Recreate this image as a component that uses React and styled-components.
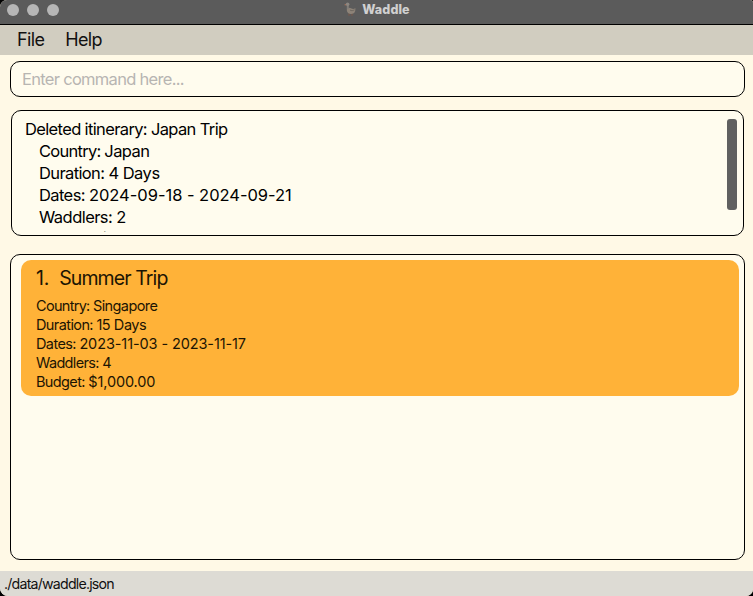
import React from 'react';
import styled, { createGlobalStyle } from 'styled-components';

const GlobalStyle = createGlobalStyle`
  * { box-sizing: border-box; }
  html, body { margin: 0; padding: 0; background: #000; overflow: hidden; }
  body { font-family: Inter, "Liberation Sans", sans-serif; color: #111; }
`;

const Window = styled.div`
  width: 753px;
  height: 596px;
  display: flex;
  flex-direction: column;
  overflow: hidden;
  background: #fff9e6;
  border-radius: 7px 3px 7px 8px;
`;

const TitleBar = styled.header`
  flex: none;
  height: 25px;
  display: grid;
  grid-template-columns: 1fr auto 1fr;
  align-items: start;
  background: #5b5b5b;
  border-bottom: 1px solid #000;
`;

const Lights = styled.div`
  display: flex;
  gap: 8px;
  padding: 4px 0 0 7px;
`;

const Light = styled.span`
  width: 12px;
  height: 12px;
  border-radius: 50%;
  background: #b6b6b6;
`;

const Title = styled.div`
  display: flex;
  gap: 5px;
  height: 19px;
  padding-left: 1px;
  align-items: center;
  font-size: 12.5px;
  font-weight: 800;
  letter-spacing: 0.1px;
  color: #d0d0d0;
`;

const GooseSvg = styled.svg`
  width: 13px;
  height: 15px;
  margin-top: -2px;
`;

const MenuBar = styled.nav`
  flex: none;
  height: 30px;
  display: flex;
  align-items: center;
  gap: 21px;
  padding-left: 17px;
  background: #d1cdc0;
`;

const MenuItem = styled.span`
  font-size: 18px;
  line-height: 30px;
  letter-spacing: -0.65px;
`;

const Content = styled.main`
  flex: 1;
  min-height: 0;
  display: flex;
  flex-direction: column;
  padding: 6px 8px 11px 10px;
`;

const Panel = styled.section`
  background: #fffcee;
  border: 1px solid #000;
  border-radius: 10px;
  overflow: hidden;
`;

const CommandBox = styled(Panel)`
  height: 36px;
  padding-left: 11px;
  display: flex;
  align-items: center;
`;

const CommandInput = styled.input`
  flex: 1;
  border: 0;
  outline: 0;
  padding: 0;
  background: transparent;
  font: 400 16.5px Inter, sans-serif;
  letter-spacing: -0.7px;
  &::placeholder { color: #b7b5b2; opacity: 1; }
`;

const ResultPanel = styled(Panel)`
  height: 126px;
  margin: 13px 1px 0;
  padding: 8px 6px 3px 13px;
  display: flex;
  justify-content: space-between;
`;

const ResultText = styled.div`
  height: 113px;
  overflow: hidden;
  color: #000;
`;

const ResultLine = styled.div`
  height: 22px;
  line-height: 20px;
  font-size: 16.5px;
  padding-left: ${(p) => (p.$indent ? '14px' : '0')};
  white-space: pre;
`;

const Tracked = styled.span`
  letter-spacing: ${(p) => p.$track}px;
`;

const ScrollThumb = styled.div`
  width: 10px;
  height: 91px;
  border-radius: 3px;
  background: #606060;
`;

const ListPanel = styled(Panel)`
  flex: 1;
  margin-top: 18px;
  padding: 5px 5px 0 10px;
`;

const Card = styled.article`
  height: 136px;
  border-radius: 10px;
  background: #ffb238;
  padding: 6px 15px 0;
  color: #1c1503;
`;

const CardTitle = styled.div`
  display: flex;
  gap: 10px;
  height: 30px;
  font-size: 19.5px;
  line-height: 25px;
`;

const CardLine = styled.div`
  height: 19px;
  line-height: 19px;
  font-size: 14.5px;
  white-space: pre;
`;

const StatusBar = styled.footer`
  flex: none;
  height: 25px;
  padding-left: 4px;
  line-height: 26px;
  font-size: 14.2px;
  letter-spacing: -0.8px;
  background: #dddbd4;
`;

const resultLines = [
  { label: 'Deleted itinerary: ', value: 'Japan Trip', track: [-0.64, -0.64] },
  { label: 'Country: ', value: 'Japan', track: [-0.74, -0.6], indent: true },
  { label: 'Duration: ', value: '4 Days', track: [-0.62, -0.5], indent: true },
  { label: 'Dates: ', value: '2024-09-18 - 2024-09-21', track: [-0.6, -0.03], indent: true },
  { label: 'Waddlers: ', value: '2', track: [-0.55, 0], indent: true },
  { label: 'Budget: ', value: '$2,000.00', track: [-0.6, -0.2], indent: true },
];

const cardLines = [
  { label: 'Country: ', value: 'Singapore', track: [-0.7, -0.6] },
  { label: 'Duration: ', value: '15 Days', track: [-0.6, -0.45] },
  { label: 'Dates: ', value: '2023-11-03 - 2023-11-17', track: [-0.6, -0.1] },
  { label: 'Waddlers: ', value: '4', track: [-0.65, 0] },
  { label: 'Budget: ', value: '$1,000.00', track: [-0.62, -0.15] },
];

function Field({ line }) {
  return (
    <>
      <Tracked $track={line.track[0]}>{line.label}</Tracked>
      <Tracked $track={line.track[1]}>{line.value}</Tracked>
    </>
  );
}

function Goose() {
  return (
    <GooseSvg viewBox="0 0 13 15" aria-hidden="true">
      <path d="M5 12.5v2.2M8 12.5v2.2" stroke="#79594b" strokeWidth="1.2" />
      <path d="M3 7.5C4 6.5 6 6.8 7.5 7.6c1.6.7 3 .3 3.8-.7.4 3-.7 6-4.3 6C4 13 2.2 10.5 3 7.5Z" fill="#8d8378" />
      <path d="M3.8 3.5V8" stroke="#827e79" strokeWidth="2" />
      <circle cx="3.6" cy="3.2" r="1.8" fill="#8c8781" />
      <path d="M2 2.8 0 4l2.2.5Z" fill="#a2735f" />
      <path d="M6 9c1.500 1 3 .7 4.500-.2" stroke="#6d675f" strokeWidth="1" fill="none" />
    </GooseSvg>
  );
}

export default function App() {
  return (
    <>
      <GlobalStyle />
      <Window>
        <TitleBar>
          <Lights><Light /><Light /><Light /></Lights>
          <Title><Goose /><span>Waddle</span></Title>
        </TitleBar>
        <MenuBar>
          <MenuItem>File</MenuItem>
          <MenuItem>Help</MenuItem>
        </MenuBar>
        <Content>
          <CommandBox>
            <CommandInput placeholder="Enter command here..." />
          </CommandBox>
          <ResultPanel>
            <ResultText>
              {resultLines.map((line) => (
                <ResultLine key={line.label} $indent={line.indent}><Field line={line} /></ResultLine>
              ))}
            </ResultText>
            <ScrollThumb />
          </ResultPanel>
          <ListPanel>
            <Card>
              <CardTitle>
                <Tracked $track={-0.2}>1.</Tracked>
                <Tracked $track={-0.9}>Summer Trip</Tracked>
              </CardTitle>
              {cardLines.map((line) => (
                <CardLine key={line.label}><Field line={line} /></CardLine>
              ))}
            </Card>
          </ListPanel>
        </Content>
        <StatusBar>./data/waddle.json</StatusBar>
      </Window>
    </>
  );
}
